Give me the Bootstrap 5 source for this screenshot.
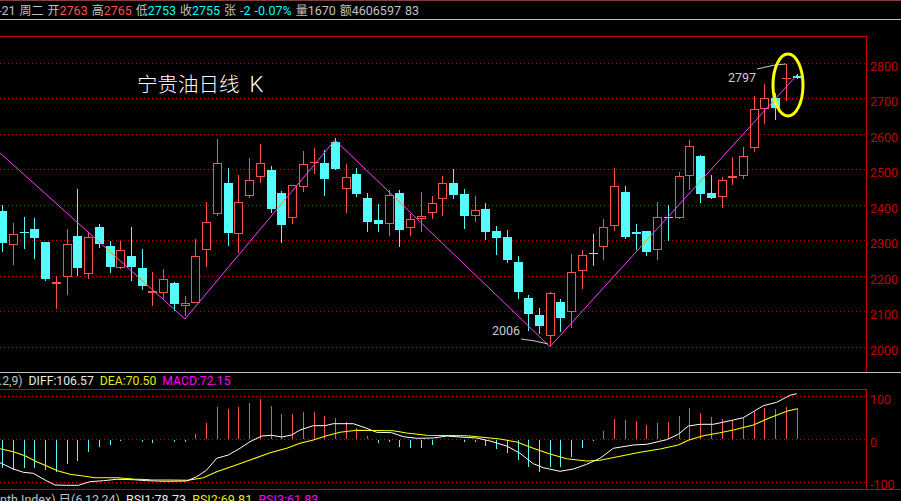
<!DOCTYPE html>
<html lang="zh">
<head>
<meta charset="utf-8">
<title>宁贵油日线 K</title>
<link href="https://cdn.jsdelivr.net/npm/bootstrap@5.3.0/dist/css/bootstrap.min.css" rel="stylesheet">
<style>
html,body{background:#000;margin:0;height:100%;overflow:hidden}
.term{width:901px;height:501px;background:#000;font-family:Roboto,"Noto Sans CJK SC",sans-serif;font-size:12.5px;color:#c0c0c0;overflow:hidden;border-top:1px solid #804040}
.infobar{height:18px;line-height:19px;word-spacing:.9px;border-bottom:1px solid #c0c0c0;box-sizing:content-box;white-space:pre;text-indent:-2px}
.cj{font-size:12px}
.up{color:#ff5050}.dn{color:#00fcfc}
.pricebox,.macdbox{display:block}
.macdhead{height:17px;line-height:17px;font-size:12.2px;white-space:pre;border-top:1px solid #c0c0c0;text-indent:-1px}
.rsihead{line-height:18px;white-space:pre;margin-top:1px}
.wh{color:#e8e8e8}.ye{color:#e8e800}.ma{color:#ff00ff}
svg text{font-family:Roboto,"Noto Sans CJK SC",sans-serif}
.axt{font-size:12.5px;fill:#c00000}
.ann{font-size:12.5px;fill:#c8ccd0}
.ttl{font-size:20.5px;fill:#fff;font-weight:300;word-spacing:5px}
.ttlk{font-size:22px}
</style>
</head>
<body>
<div class="term d-flex flex-column">
  <div class="infobar flex-shrink-0">-21 <span class="cj">周二</span> <span class="cj">开</span><span class="up">2763</span> <span class="cj">高</span><span class="up">2765</span> <span class="cj">低</span><span class="dn">2753</span> <span class="cj">收</span><span class="dn">2755</span> <span class="cj">张</span> <span class="dn">-2 -0.07%</span> <span class="cj">量</span>1670 <span class="cj">额</span>4606597 83</div>
  <svg id="price" class="pricebox flex-shrink-0" width="901" height="352" viewBox="0 20 901 352" shape-rendering="crispEdges"></svg>
  <div class="macdhead flex-shrink-0"><span>.2,9)</span>  <span class="wh">DIFF:106.57</span>  <span class="ye">DEA:70.50</span>  <span class="ma">MACD:72.15</span></div>
  <svg id="macd" class="macdbox flex-shrink-0" width="901" height="101" viewBox="0 389 901 101" shape-rendering="crispEdges"></svg>
  <div class="rsihead flex-shrink-0">nth Index) 日(6,12,24)  <span class="wh">RSI1:78.73</span>  <span class="ye">RSI2:69.81</span>  <span class="ma">RSI3:61.83</span></div>
</div>
<script>
const R='#ff5050',C='#54fcfc',GR='#c00000';
const groups=[
{ox:0,oy:120,d:[
['c',7,255,395,273,369],['r',40,309,435,343,374],['c',73,291,387,336,339],['c',103,294,417,327,354],['c',136,366,483,366,477],['r',169,468,567,486,492],['r',202,327,525,373,470],['c',232,207,468,348,444],['r',265,336,477,351,461],['c',298,312,384,321,372],['c',331,363,459,378,441],['r',361,363,447,391,444],['c',394,321,483,408,441],['c',427,387,510,444,498],['r',457,456,558,513,519],['r',490,447,540,478,519],['c',523,486,573,489,552],['r',556,528,588,549,557],['r',586,357,549,409,548],['r',619,246,441,307,389],['r',652,57,288,130,281],['c',685,144,378,189,339],['r',715,165,399,247,341],['r',748,114,234,181,227],['r',781,72,189,130,170],['c',814,138,279,150,267],['c',844,213,369,219,315],['r',877,195,312,196,293]]},
{ox:300,oy:120,d:[
['r',10,93,216,133,200],['r',43,84,162,126,130],['c',73,90,228,129,177],['c',106,54,150,66,147],['r',139,132,279,172,206],['c',169,144,231,162,222],['c',202,219,336,234,306],['c',235,252,336,300,312],['r',268,210,348,226,311],['c',298,210,381,219,330],['r',331,282,348,298,323],['r',364,216,336,289,297],['r',397,228,297,250,278],['r',427,168,288,190,236],['c',460,147,237,189,225],['c',493,207,327,222,288],['r',526,228,306,271,287],['c',556,249,360,267,336],['c',589,318,405,333,354],['c',622,330,429,351,420],['c',655,408,537,426,516],['c',685,525,633,534,582],['c',718,564,642,585,618],['r',751,516,678,520,647],['c',781,537,636,546,594],['r',814,402,624,457,575],['r',847,390,507,406,452],['c',880,342,438,399,402]]},
{ox:600,oy:40,d:[
['r',10,537,660,562,622],['r',43,384,573,439,559],['c',76,438,597,456,591],['c',109,552,630,576,582],['c',139,573,648,573,636],['r',172,486,660,532,631],['c',205,495,603,531,534],['r',238,396,537,409,533],['r',268,300,450,319,409],['c',301,345,489,348,462],['c',334,405,477,459,474],['r',367,411,504,421,470],['r',397,351,435,409,415],['r',430,321,417,349,407],['r',463,168,336,208,323],['r',493,132,252,175,206],['c',526,159,240,174,205],['r',559,72,183,115,118],['c',592,102,117,108,114]]}];
let s='';
const hl=(x1,x2,y,c,extra='')=>`<line x1="${x1}" x2="${x2}" y1="${y}" y2="${y}" stroke="${c}" ${extra}/>`;
const vl=(x,y1,y2,c)=>`<line x1="${x}" x2="${x}" y1="${y1}" y2="${y2}" stroke="${c}"/>`;
const rnd=Math.round;
/* price grid */
[63,98,134,169,205,240,276,311,347].forEach(y=>{s+=hl(0,866,y+.5,GR,'stroke-dasharray="1 3"')});
s+=hl(0,867,36.5,'#d00000');
s+=vl(866.5,36,372,'#c80000');
[[2800,63],[2700,98],[2600,134],[2500,169],[2400,205],[2300,240],[2200,276],[2100,311],[2000,347]].forEach(([t,y])=>{s+=`<text class="axt" x="870" y="${y+8}">${t}</text>`});
/* candles */
let clip='';
groups.forEach(g=>g.d.forEach(([k,zx,t,b,o,c])=>{
  const x=g.ox+zx/3,cx=Math.floor(x)+.5,yt=rnd(g.oy+t/3),yb=rnd(g.oy+b/3),bt=rnd(g.oy+o/3),bb=rnd(g.oy+c/3),col=k=='r'?R:C,L=Math.floor(x)-4;
  s+=vl(cx,yt,yb,col);
  if(bb-bt<=2){s+=`<rect x="${L}" y="${bt}" width="9" height="${Math.max(bb-bt,1)}" fill="${col}"/>`}
  else if(k=='r'){s+=`<rect x="${L+.5}" y="${bt+.5}" width="8" height="${bb-bt-1}" fill="#000" stroke="${col}"/>`}
  else{s+=`<rect x="${L}" y="${bt}" width="9" height="${bb-bt}" fill="${col}"/>`;clip+=`<rect x="${L}" y="${bt}" width="9" height="${bb-bt}"/>`}
}));
const zz='0,153 185,319 335,140 550,346.7 797,75';
const sv=document.getElementById('price');
s+=`<defs><clipPath id="cy">${clip}</clipPath></defs>`;
s+=`<polyline points="${zz}" fill="none" stroke="#ff40ff" shape-rendering="auto"/>`;
s+=`<polyline points="${zz}" fill="none" stroke="#c8c000" clip-path="url(#cy)" shape-rendering="auto"/>`;
/* annotations */
s+=`<polyline points="757,69 766,67 775,65 786,64" fill="none" stroke="#c8c8c8" shape-rendering="auto"/>`;
s+=`<polyline points="521,339 535,341 548,344" fill="none" stroke="#c8c8c8" shape-rendering="auto"/>`;
s+=`<text class="ann" x="728" y="82">2797</text><text class="ann" x="492" y="335">2006</text>`;
s+=`<text class="ttl" x="137" y="92">宁贵油日线 <tspan class="ttlk">K</tspan></text>`;
s+=`<ellipse cx="788" cy="85" rx="15" ry="31" fill="none" stroke="#ffff00" stroke-width="3" shape-rendering="auto"/>`;
sv.innerHTML=s;
/* MACD */
const Y=z=>365+z/3;
const bars=[
[0,[[7,309],[40,314],[73,310],[103,309],[136,316],[169,321],[202,297],[232,287],[265,261],[298,246],[331,240],[361,229],[394,226],[427,232],[457,235],[490,226],[523,232],[556,232],[586,207],[619,174],[652,126],[685,132],[715,126],[748,114],[781,102],[814,123],[844,147],[877,147]]],
[300,[[10,141],[43,141],[73,153],[106,159],[139,171],[169,189],[202,213],[235,234],[268,231],[298,246],[331,249],[364,249],[397,240],[427,225],[493,231],[526,231],[556,243],[589,252],[622,264],[655,285],[685,306],[718,321],[751,306],[781,306],[814,276],[847,249],[880,228]]],
[600,[[10,198],[43,162],[76,165],[109,168],[139,180],[172,174],[205,171],[238,153],[268,129],[301,144],[334,156],[367,162],[397,165],[430,159],[463,141],[493,129],[526,132],[559,126],[592,130]]]];
const white=[[0,[[0,293],[40,312],[70,322],[100,325],[135,345],[165,360],[200,361],[235,361],[270,350],[310,347],[350,343],[400,344],[440,347],[500,349],[560,348],[590,335],[620,315],[650,280],[685,270],[720,250],[750,230],[785,213],[815,211],[845,216],[875,210]]],[300,[[0,195],[40,182],[75,182],[100,176],[160,176],[200,190],[230,202],[275,203],[310,215],[350,220],[400,219],[440,213],[480,216],[530,219],[570,228],[620,243],[660,265],[700,296],[730,308],[780,319],[820,312],[860,298]]],[600,[[0,280],[40,250],[100,240],[140,238],[200,224],[235,208],[265,183],[300,178],[340,178],[400,165],[430,158],[490,122],[530,112],[570,91],[590,86]]]];
const yellow=[[0,[[0,251],[40,260],[75,272],[110,290],[140,303],[175,318],[210,328],[250,333],[285,338],[350,338],[400,342],[450,344],[510,345],[565,346],[610,338],[650,320],[700,303],[750,285],[810,263],[860,250]]],[300,[[0,235],[40,225],[80,212],[120,202],[170,196],[280,197],[320,204],[380,211],[500,212],[540,216],[600,222],[650,231],[700,250],[750,267],[800,281],[860,288]]],[600,[[0,286],[60,274],[120,262],[180,252],[235,240],[265,226],[310,212],[360,203],[400,195],[460,180],[510,158],[560,139],[592,131]]]];
const pts=a=>a.flatMap(([o,p])=>p.map(([x,z])=>`${(o+x/3).toFixed(1)},${Y(z).toFixed(1)}`)).join(' ');
let m='';
m+=hl(0,867,389.5,'#d00000')+hl(0,901,489.5,'#d00000');
[396,439,482].forEach(y=>{m+=hl(0,866,y+.5,GR,'stroke-dasharray="1 3"')});
m+=vl(866.5,389,490,'#c80000');
bars.forEach(([o,list])=>list.forEach(([x,z])=>{const X=Math.floor(o+x/3)+.5,y=rnd(Y(z));m+=y<439?vl(X,y,439,R):vl(X,440,y,C)}));
m+=`<polyline points="${pts(yellow)}" fill="none" stroke="#ffff00" stroke-width="1.1" shape-rendering="auto"/>`;
m+=`<polyline points="${pts(white)}" fill="none" stroke="#fff" stroke-width="1" shape-rendering="auto"/>`;
m+=`<text class="axt" x="870" y="404">100</text><text class="axt" x="870" y="447">0</text><text class="axt" x="870" y="489">-100</text>`;
document.getElementById('macd').innerHTML=m;
</script>
<script src="https://cdn.jsdelivr.net/npm/bootstrap@5.3.0/dist/js/bootstrap.bundle.min.js"></script>
</body>
</html>
